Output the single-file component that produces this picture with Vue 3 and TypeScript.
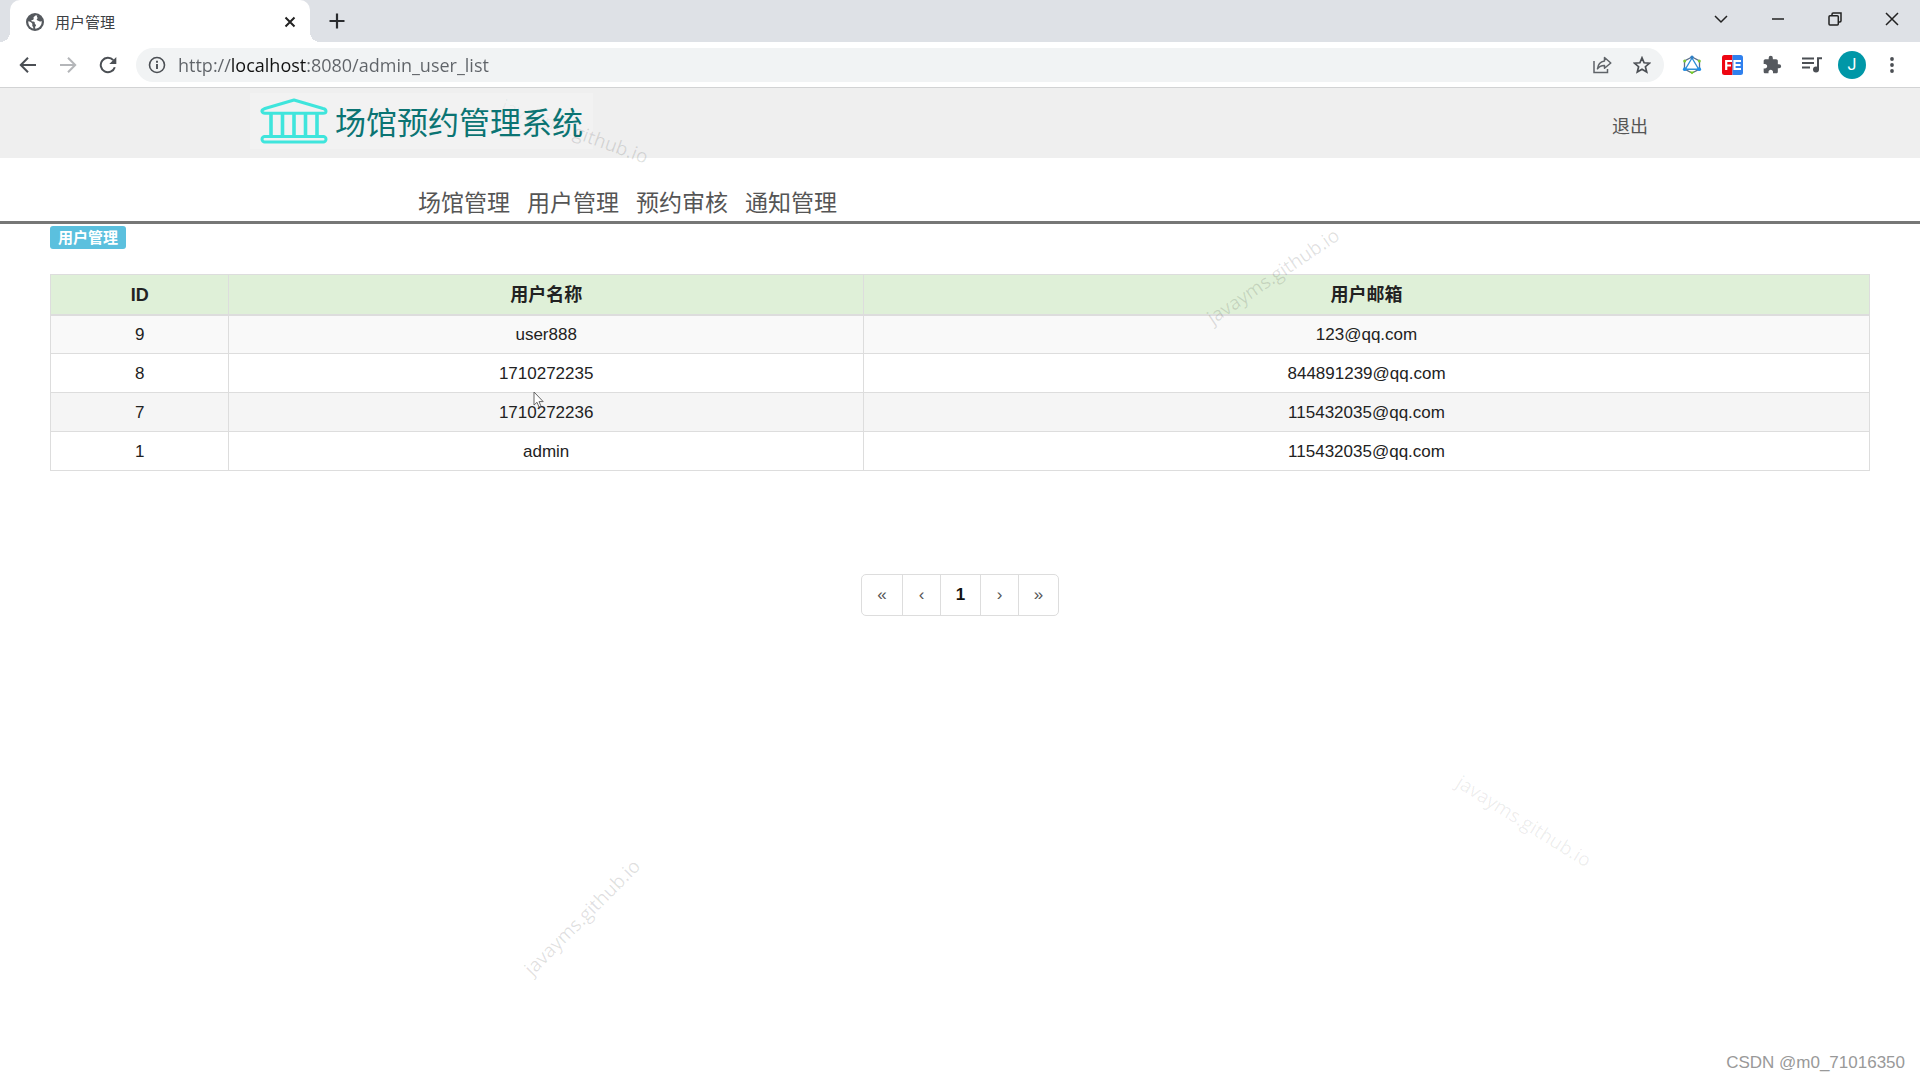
<script setup lang="ts">
import { ref } from 'vue'

interface User {
  id: number
  name: string
  email: string
}

const users: User[] = [
  { id: 9, name: 'user888', email: '123@qq.com' },
  { id: 8, name: '1710272235', email: '844891239@qq.com' },
  { id: 7, name: '1710272236', email: '115432035@qq.com' },
  { id: 1, name: 'admin', email: '115432035@qq.com' },
]

const hovered = ref<number>(7)
const address = ref('http://localhost:8080/admin_user_list')
const navItems: string[] = ['场馆管理', '用户管理', '预约审核', '通知管理']
const pages: string[] = ['«', '‹', '1', '›', '»']
</script>

<template>
  <div class="window">
    <div class="tabstrip">
      <div class="tab">
        <svg class="globe" width="18" height="18" viewBox="0 0 18 18" aria-hidden="true">
          <circle cx="9" cy="9" r="9" fill="#55595e" />
          <path d="M9.6 2.2c-.3 1.2-1.6 1-2 2-.3.9.4 1.2 0 2-.5.9-1.9.4-2.2 1.3-.2.8.6 1.1 1.7 1.1 1.5 0 1.8.9 1.7 1.9 0 .8 1.1.8 1.2 1.7.1.8-.8 1-.9 1.9-.1.6.1 1.2.3 1.6 3.600-.3 6.300-3.100 6.300-6.700 0-.4 0-.8-.1-1.100-.9.8-2.300.9-2.900.2-.5-.6-1.500-.3-1.900-1-.5-1 .9-1.200.8-2.100 0-.6-.7-.8-.7-1.500 0-.4.300-.6.600-.8-.6-.3-1.200-.500-1.900-.500z" fill="#fff" />
          <path d="M2.300 8.200c1.500.2 3.200.9 3.900 2.300.5 1.100-.2 1.600.2 2.600.3.800.9.900 1 2.400C4.200 14.800 2 11.800 2.300 8.200z" fill="#fff" />
        </svg>
        <span class="tab-title">用户管理</span>
        <button class="plain tab-close" aria-label="关闭标签页">
          <svg width="12" height="12" viewBox="0 0 12 12"><path d="M1.500 1.500l9 9M10.500 1.500l-9 9" stroke="#222" stroke-width="2" /></svg>
        </button>
      </div>
      <button class="plain new-tab" aria-label="新标签页">
        <svg width="16" height="16" viewBox="0 0 16 16"><path d="M8 .5v15M.5 8h15" stroke="#2a2c2f" stroke-width="2.200" /></svg>
      </button>
      <div class="win-controls">
        <button class="plain" aria-label="搜索标签页">
          <svg width="14" height="14" viewBox="0 0 14 14"><path d="M1 4l6 6 6-6" fill="none" stroke="#222" stroke-width="1.500" /></svg>
        </button>
        <button class="plain" aria-label="最小化">
          <svg width="14" height="14" viewBox="0 0 14 14"><path d="M1 7h12" stroke="#222" stroke-width="1.500" /></svg>
        </button>
        <button class="plain" aria-label="还原">
          <svg width="14" height="14" viewBox="0 0 14 14"><path d="M4 3.500V2.200Q4 1 5.200 1H13v7.800Q13 10 11.800 10H10.500" fill="none" stroke="#222" stroke-width="1.500" /><rect x="1" y="3.700" width="9.300" height="9.300" rx="1" fill="none" stroke="#222" stroke-width="1.500" /></svg>
        </button>
        <button class="plain" aria-label="关闭">
          <svg width="14" height="14" viewBox="0 0 14 14"><path d="M1 1l12 12M13 1L1 13" stroke="#222" stroke-width="1.500" /></svg>
        </button>
      </div>
    </div>

    <div class="toolbar">
      <button class="plain tool" aria-label="后退">
        <svg width="18" height="18" viewBox="0 0 18 18"><path d="M17 9H2M9 1.800L1.800 9 9 16.200" fill="none" stroke="#4b4f54" stroke-width="2" /></svg>
      </button>
      <button class="plain tool" aria-label="前进">
        <svg width="18" height="18" viewBox="0 0 18 18"><path d="M1 9h15M9 1.800L16.200 9 9 16.200" fill="none" stroke="#b4b6b9" stroke-width="2" /></svg>
      </button>
      <button class="plain tool" aria-label="重新加载">
        <svg width="18" height="18" viewBox="0 0 18 18"><path d="M15.800 11.200A7.200 7.200 0 1 1 14.300 4.200" fill="none" stroke="#4b4f54" stroke-width="2" /><path d="M17.300 1v7h-7z" fill="#4b4f54" /></svg>
      </button>
      <div class="omnibox">
        <svg class="info" width="18" height="18" viewBox="0 0 18 18" aria-hidden="true"><circle cx="9" cy="9" r="7.500" fill="none" stroke="#4b4f54" stroke-width="1.600" /><path d="M9 8v5M9 4.800v1.900" stroke="#4b4f54" stroke-width="1.900" /></svg>
        <input v-model="address" class="address" type="text" aria-label="地址栏" spellcheck="false" />
        <button class="plain tool" aria-label="分享">
          <svg width="20" height="18" viewBox="0 0 20 18"><path d="M2 5v11.500h13.500V13" fill="none" stroke="#5f6368" stroke-width="1.500" /><path d="M12.500 1.500L18.800 7l-6.300 5.300V9.400c-3.200-.1-5.300.9-7 3.400.4-4.300 2.900-7.300 7-7.900z" fill="none" stroke="#5f6368" stroke-width="1.500" stroke-linejoin="round" /></svg>
        </button>
        <button class="plain tool" aria-label="收藏">
          <svg width="18" height="18" viewBox="0 0 18 18"><path d="M9 1.800l2.100 5 5.400.4-4.100 3.500 1.300 5.300L9 13.200 4.300 16l1.300-5.300L1.500 7.200l5.400-.4z" fill="none" stroke="#4b4f54" stroke-width="1.700" /></svg>
        </button>
      </div>
      <div class="extensions">
        <button class="plain tool" aria-label="扩展一">
          <svg width="20" height="20" viewBox="0 0 20 20"><path d="M10 2L2.500 6v8L10 18l7.500-4V6z" fill="none" stroke="#5b6f8a" stroke-width="1.300" /><path d="M10 3L3.300 14.200h13.400z" fill="#fff" stroke="#2f8fd8" stroke-width="1.400" /><circle cx="10" cy="2.200" r="1.700" fill="#2f7fc4" /><circle cx="2.800" cy="14.200" r="1.900" fill="#2090e8" /><circle cx="17.200" cy="14.200" r="1.900" fill="#2090e8" /><circle cx="2.700" cy="6" r="1.500" fill="#7dc832" /><circle cx="17.300" cy="6" r="1.500" fill="#7dc832" /><path d="M7.500 16.500h5L10 19.300z" fill="#78d21e" /></svg>
        </button>
        <button class="plain tool" aria-label="扩展二">
          <svg width="21" height="20" viewBox="0 0 21 20"><path d="M2.500 0H10.500V20H2.500Q0 20 0 17.500V2.500Q0 0 2.500 0z" fill="#ee0612" /><path d="M10.500 0H18.500Q21 0 21 2.500V17.500Q21 20 18.500 20H10.500z" fill="#2f80ee" /><path d="M10 6H4.200V15M4.200 10.500H9M19 6h-6.500v8H19M12.500 10H18.500" fill="none" stroke="#fff" stroke-width="2.200" /></svg>
        </button>
        <button class="plain tool" aria-label="扩展程序">
          <svg width="20" height="20" viewBox="0 0 24 24"><path fill="#55595e" d="M20.500 11H19V7c0-1.100-.9-2-2-2h-4V3.500a2.500 2.500 0 0 0-5 0V5H4c-1.100 0-2 .9-2 2v3.800h1.500c1.500 0 2.700 1.200 2.700 2.700S5 16.200 3.500 16.200H2V20c0 1.100.9 2 2 2h3.800v-1.500c0-1.500 1.200-2.700 2.700-2.700s2.700 1.200 2.700 2.700V22H17c1.100 0 2-.9 2-2v-4h1.500a2.500 2.500 0 0 0 0-5z" /></svg>
        </button>
        <button class="plain tool" aria-label="媒体控制">
          <svg width="20" height="18" viewBox="0 0 20 18"><path d="M0 2.500h12M0 7h12M0 11.500h8" stroke="#4b4f54" stroke-width="1.800" /><path d="M16 14V2.200h4" fill="none" stroke="#4b4f54" stroke-width="2" /><circle cx="14" cy="13.500" r="3" fill="#4b4f54" /></svg>
        </button>
        <button class="plain tool" aria-label="用户"><span class="avatar">J</span></button>
        <button class="plain tool" aria-label="菜单">
          <svg width="6" height="18" viewBox="0 0 6 18"><circle cx="3" cy="3" r="1.900" fill="#4b4f54" /><circle cx="3" cy="9" r="1.900" fill="#4b4f54" /><circle cx="3" cy="15" r="1.900" fill="#4b4f54" /></svg>
        </button>
      </div>
    </div>

    <header class="site-header">
      <div class="brand">
        <svg width="68" height="46" viewBox="0 0 68 46" aria-hidden="true">
          <g fill="none" stroke="#3fe5dc" stroke-width="3">
            <path d="M34 2L5 10.500Q1.500 12 2 13.500T5 15.200H63Q66 15.200 66 13.200T63 10.500z" stroke-linejoin="round" />
            <rect x="2" y="38.500" width="64" height="5.500" rx="2.700" />
            <path d="M11 15v23M22.500 15v23M34 15v23M45.500 15v23M57 15v23" stroke-width="3.600" />
          </g>
        </svg>
        <h1>场馆预约管理系统</h1>
      </div>
      <a class="logout" href="#">退出</a>
    </header>

    <nav class="site-nav">
      <a v-for="item in navItems" :key="item" href="#">{{ item }}</a>
    </nav>

    <main class="content">
      <h2 class="label">用户管理</h2>
      <table>
        <colgroup>
          <col class="col-id" />
          <col class="col-name" />
          <col />
        </colgroup>
        <thead>
          <tr><th>ID</th><th>用户名称</th><th>用户邮箱</th></tr>
        </thead>
        <tbody>
          <tr v-for="user in users" :key="user.id" :class="{ hovered: hovered === user.id }">
            <td>{{ user.id }}</td>
            <td>{{ user.name }}</td>
            <td>{{ user.email }}</td>
          </tr>
        </tbody>
      </table>
      <div class="pagination">
        <button v-for="page in pages" :key="page" :class="{ current: page === '1' }">{{ page }}</button>
      </div>
    </main>

    <span class="mark mark-a"><i>javayms.</i>github.io</span>
    <span class="mark mark-b">javayms.github.io</span>
    <span class="mark mark-c">javayms.github.io</span>
    <span class="mark mark-d">javayms.github.io</span>
    <span class="credit">CSDN @m0_71016350</span>
    <svg class="pointer" width="12" height="18" viewBox="0 0 12 18" aria-hidden="true"><path d="M1 1v13l3-2.700L6 16l2-.9-2-4.500h4.200z" fill="#fff" stroke="#666" stroke-width="1" /></svg>
  </div>
</template>

<style>
body {
  margin: 0;
  background: #fff;
}
</style>

<style scoped>
* {
  box-sizing: border-box;
}
.window {
  position: relative;
  min-height: 100vh;
  overflow: hidden;
  font-family: "Liberation Sans", "Noto Sans CJK SC", sans-serif;
  color: #222;
}
svg {
  display: block;
}
.plain {
  display: flex;
  align-items: center;
  justify-content: center;
  padding: 0;
  border: 0;
  background: none;
}
.tabstrip {
  display: flex;
  height: 42px;
  padding-left: 10px;
  background: #dee1e6;
}
.tab {
  position: relative;
  display: flex;
  align-items: center;
  width: 300px;
  padding: 1px 12px 0 16px;
  border-radius: 10px 10px 0 0;
  background: #fff;
}
.tab::before,
.tab::after {
  content: "";
  position: absolute;
  bottom: 0;
  width: 10px;
  height: 10px;
}
.tab::before {
  right: 100%;
  background: radial-gradient(circle at 0 0, #dee1e6 10px, #fff 10px);
}
.tab::after {
  left: 100%;
  background: radial-gradient(circle at 100% 0, #dee1e6 10px, #fff 10px);
}
.tab-title {
  flex: 1;
  padding-left: 11px;
  font: 15px/24px "Noto Sans CJK SC", sans-serif;
  color: #3c4043;
}
.tab-close {
  width: 16px;
  height: 16px;
}
.new-tab {
  width: 54px;
}
.win-controls {
  display: flex;
  margin-left: auto;
}
.win-controls button {
  width: 57px;
  height: 37px;
}
.toolbar {
  display: flex;
  align-items: center;
  gap: 8px;
  height: 46px;
  padding: 1px 8px 0;
  border-bottom: 1px solid #d2d3d4;
}
.tool {
  flex: none;
  width: 40px;
  height: 34px;
}
.toolbar > .tool + .tool {
  margin-left: -8px;
}
.omnibox {
  display: flex;
  flex: 1;
  align-items: center;
  height: 34px;
  padding: 0 2px 0 12px;
  border-radius: 17px;
  background: #f1f3f4;
}
.address {
  flex: 1;
  min-width: 0;
  height: 30px;
  padding: 0;
  margin-left: 12px;
  border: 0;
  outline: 0;
  font: 18px/30px "Open Sans", "Noto Sans", sans-serif;
  color: transparent;
  background: linear-gradient(90deg, #5f6368 54px, #111 54px, #111 129px, #5f6368 129px);
  -webkit-background-clip: text;
  background-clip: text;
}
.extensions {
  display: flex;
}
.avatar {
  width: 28px;
  height: 28px;
  border-radius: 50%;
  background: #0097a7;
  color: #fff;
  font: 16px/28px Roboto, sans-serif;
  text-align: center;
}
.site-header {
  display: flex;
  align-items: center;
  justify-content: space-between;
  height: 70px;
  padding: 0 272px 4px 250px;
  background: #efefef;
}
.brand {
  display: flex;
  align-items: center;
  height: 56px;
  padding: 0 10px;
  background: #f2f2f2;
}
h1 {
  margin: 0 0 0 7px;
  font: 400 31px/40px "Noto Sans CJK SC", sans-serif;
  color: #0b7473;
}
.logout {
  padding-top: 8px;
  font: 18px/26px "Noto Sans CJK SC", sans-serif;
  color: #555;
  text-decoration: none;
}
.site-nav {
  display: flex;
  align-items: flex-end;
  gap: 17px;
  height: 66px;
  padding: 0 0 2px 418px;
  border-bottom: 3px solid #767776;
}
.site-nav a {
  font: 23px/36px "Noto Sans CJK SC", sans-serif;
  color: #555;
  text-decoration: none;
}
.content {
  padding: 2px 50px 0;
}
.label {
  width: fit-content;
  margin: 0 0 25px;
  padding: 0 8px 2px;
  border-radius: 3px;
  background: #5bc0de;
  font: 700 15px/21px "Noto Sans CJK SC", sans-serif;
  color: #fff;
}
table {
  width: 100%;
  table-layout: fixed;
  border-collapse: collapse;
  font-size: 17px;
  line-height: 24px;
  text-align: center;
}
.col-id {
  width: 9.8%;
}
.col-name {
  width: 34.9%;
}
th,
td {
  height: 39px;
  padding: 2px 0 0;
  border: 1px solid #ddd;
}
th {
  height: 40px;
  border-bottom-width: 2px;
  background: #dff0d8;
  font-size: 18px;
}
tbody tr:nth-child(odd) {
  background: #f9f9f9;
}
tbody tr.hovered {
  background: #f5f5f5;
}
.pagination {
  display: flex;
  width: fit-content;
  margin: 103px auto 0;
  border: 1px solid #ddd;
  border-radius: 5px;
}
.pagination button {
  width: 38px;
  height: 40px;
  padding: 0;
  border: 0;
  background: none;
  font: 17px/24px "Liberation Sans", sans-serif;
  color: #555;
}
.pagination button + button {
  border-left: 1px solid #ddd;
}
.pagination button:nth-child(odd) {
  width: 40px;
}
.pagination .current {
  font-weight: 700;
  color: #111;
}
.mark {
  position: absolute;
  font: 19px/24px "Open Sans", sans-serif;
  color: rgba(0, 0, 0, 0.12);
  white-space: nowrap;
  pointer-events: none;
  translate: -50% -50%;
}
.mark i {
  font-style: normal;
  color: rgba(0, 0, 0, 0.05);
}
.mark-a {
  left: 575px;
  top: 131px;
  rotate: 20deg;
}
.mark-b {
  left: 1273px;
  top: 276px;
  rotate: -34deg;
}
.mark-c {
  left: 582px;
  top: 917px;
  rotate: -45deg;
}
.mark-d {
  left: 1524px;
  top: 821px;
  rotate: 32deg;
  color: rgba(0, 0, 0, 0.08);
}
.credit {
  position: absolute;
  right: 15px;
  bottom: 7px;
  font-size: 17px;
  line-height: 20px;
  color: #999;
}
.pointer {
  position: absolute;
  left: 533px;
  top: 391px;
}
</style>
